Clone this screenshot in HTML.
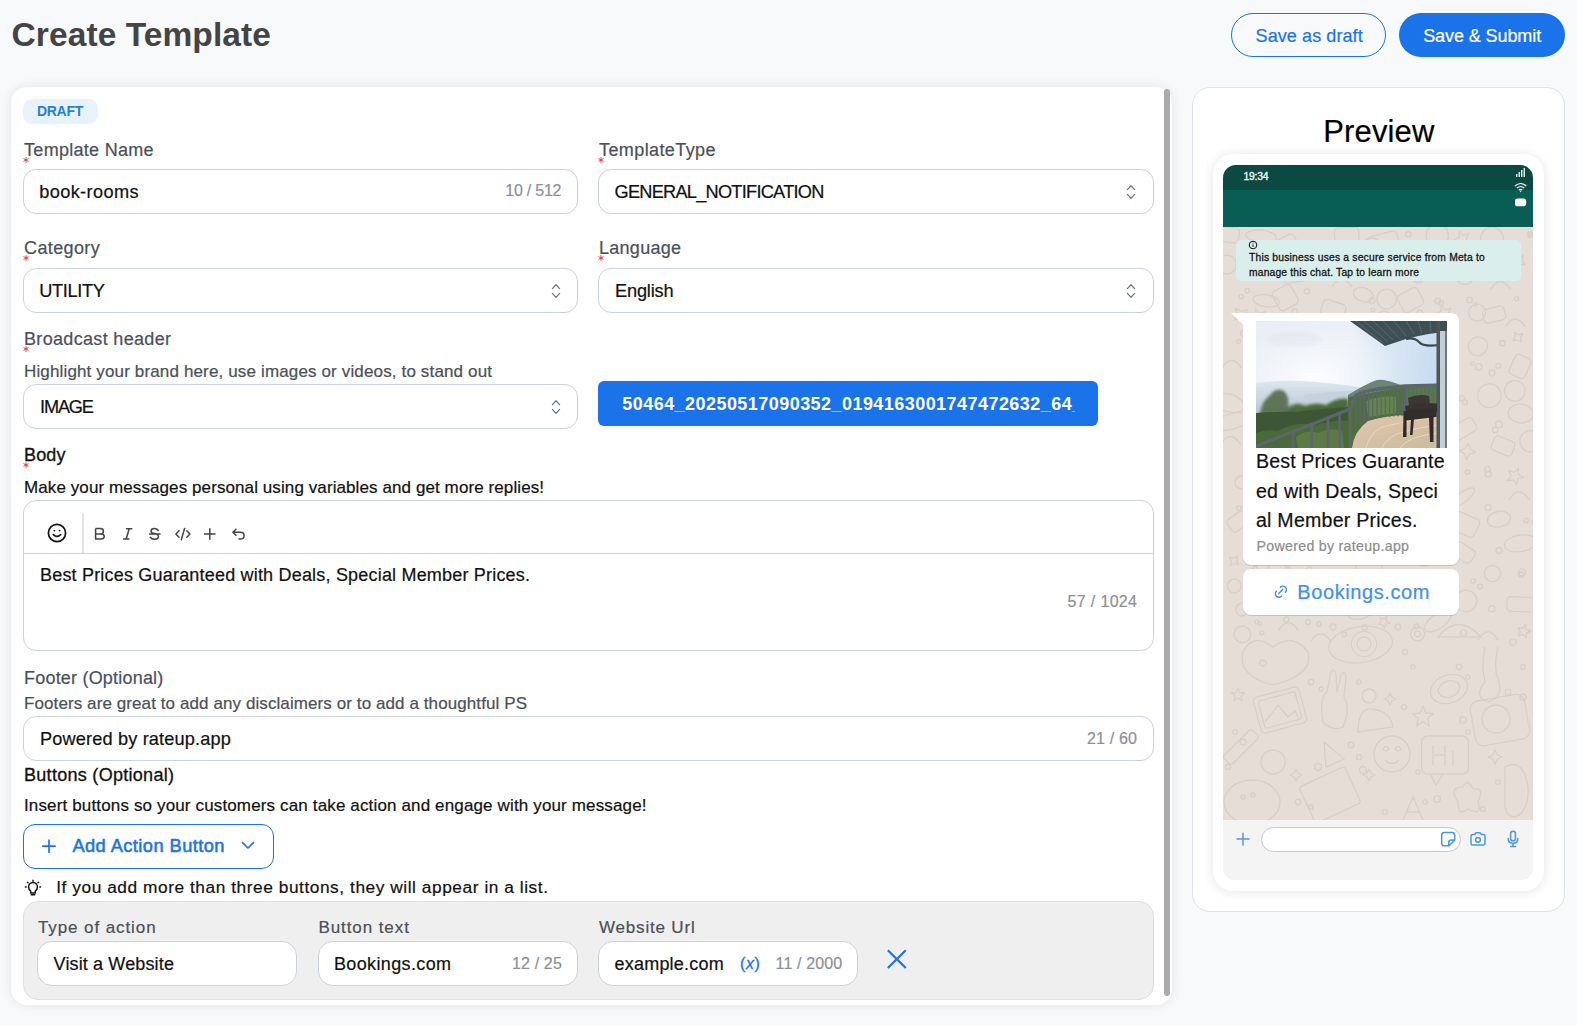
<!DOCTYPE html>
<html><head><meta charset="utf-8"><title>Create Template</title>
<style>
html,body{margin:0;padding:0;}
body{width:1577px;height:1026px;overflow:hidden;position:relative;background:#f8f9fb;font-family:"Liberation Sans",sans-serif;}
.t{position:absolute;white-space:nowrap;}
.b{position:absolute;}
</style></head><body>
<div class="t" style="top:17.94px;font-size:33.5px;line-height:33.5px;color:#444;font-weight:bold;letter-spacing:0.080px;left:11.60px;">Create Template</div>
<div class="b" style="left:1231px;top:13px;width:155px;height:44px;border:1px solid #1a73e8;border-radius:22px;box-sizing:border-box;"></div>
<div class="t" style="top:26.66px;font-size:18px;line-height:18px;color:#1a73e8;letter-spacing:0.087px;-webkit-text-stroke:0.2px #1a73e8;left:1255.60px;">Save as draft</div>
<div class="b" style="left:1399px;top:13px;width:166px;height:44px;background:#1a73e8;border-radius:22px;"></div>
<div class="t" style="top:26.86px;font-size:18px;line-height:18px;color:#fff;letter-spacing:-0.088px;-webkit-text-stroke:0.2px #fff;left:1423.20px;">Save &amp; Submit</div>
<div class="b" style="left:11px;top:87px;width:1161px;height:918px;background:#fff;border-radius:16px;box-shadow:0 0 12px rgba(0,0,0,0.09);"></div>
<div class="b" style="left:1164px;top:89px;width:6px;height:907px;background:#ababab;border-radius:3px;"></div>
<div class="b" style="left:23px;top:99px;width:75px;height:25px;background:#e8f2fc;border-radius:9px;"></div>
<div class="t" style="top:104.15px;font-size:14px;line-height:14px;color:#1f7fe0;font-weight:bold;letter-spacing:-0.259px;left:36.90px;">DRAFT</div>
<div class="t" style="top:140.76px;font-size:18px;line-height:18px;color:#4a5059;letter-spacing:0.279px;-webkit-text-stroke:0.2px #4a5059;left:24.10px;">Template Name</div>
<svg class="b" style="left:21.9px;top:156px" width="8" height="8" viewBox="0 0 8 8"><path d="M4 1.6 V6.4 M1.9 2.8 L6.1 5.2 M6.1 2.8 L1.9 5.2" stroke="#f03030" stroke-width="0.95" stroke-linecap="round"/></svg>
<div class="b" style="left:23px;top:169px;width:555px;height:45px;background:#fff;border:1px solid #cdd3db;border-radius:13px;box-sizing:border-box;"></div>
<div class="t" style="top:183.29px;font-size:18.2px;line-height:18.2px;color:#111;letter-spacing:0.367px;-webkit-text-stroke:0.2px #111;left:39.20px;">book-rooms</div>
<div class="t" style="top:183.46px;font-size:16px;line-height:16px;color:#8b9099;letter-spacing:-0.218px;-webkit-text-stroke:0.2px #8b9099;right:1015.50px;margin-right:0.218px;">10 / 512</div>
<div class="t" style="top:140.76px;font-size:18px;line-height:18px;color:#4a5059;letter-spacing:0.403px;-webkit-text-stroke:0.2px #4a5059;left:599.00px;">TemplateType</div>
<svg class="b" style="left:596.9px;top:156px" width="8" height="8" viewBox="0 0 8 8"><path d="M4 1.6 V6.4 M1.9 2.8 L6.1 5.2 M6.1 2.8 L1.9 5.2" stroke="#f03030" stroke-width="0.95" stroke-linecap="round"/></svg>
<div class="b" style="left:598px;top:169px;width:556px;height:45px;background:#fff;border:1px solid #cdd3db;border-radius:13px;box-sizing:border-box;"></div>
<div class="t" style="top:183.29px;font-size:18.2px;line-height:18.2px;color:#111;letter-spacing:-0.745px;-webkit-text-stroke:0.2px #111;left:614.50px;">GENERAL_NOTIFICATION</div>
<svg class="b" style="left:1125px;top:183px" width="12" height="18" viewBox="0 0 12 18"><path d="M2.4 6.6 L6 2.8 L9.6 6.6 M2.4 11.4 L6 15.3 L9.6 11.4" fill="none" stroke="#6b7280" stroke-width="1.25" stroke-linecap="round" stroke-linejoin="round"/></svg>
<div class="t" style="top:238.76px;font-size:18px;line-height:18px;color:#4a5059;letter-spacing:0.380px;-webkit-text-stroke:0.2px #4a5059;left:24.00px;">Category</div>
<svg class="b" style="left:21.9px;top:254px" width="8" height="8" viewBox="0 0 8 8"><path d="M4 1.6 V6.4 M1.9 2.8 L6.1 5.2 M6.1 2.8 L1.9 5.2" stroke="#f03030" stroke-width="0.95" stroke-linecap="round"/></svg>
<div class="b" style="left:23px;top:268px;width:555px;height:45px;background:#fff;border:1px solid #cdd3db;border-radius:13px;box-sizing:border-box;"></div>
<div class="t" style="top:281.59px;font-size:18.2px;line-height:18.2px;color:#111;letter-spacing:-0.359px;-webkit-text-stroke:0.2px #111;left:39.30px;">UTILITY</div>
<svg class="b" style="left:550px;top:282px" width="12" height="18" viewBox="0 0 12 18"><path d="M2.4 6.6 L6 2.8 L9.6 6.6 M2.4 11.4 L6 15.3 L9.6 11.4" fill="none" stroke="#6b7280" stroke-width="1.25" stroke-linecap="round" stroke-linejoin="round"/></svg>
<div class="t" style="top:238.76px;font-size:18px;line-height:18px;color:#4a5059;letter-spacing:0.273px;-webkit-text-stroke:0.2px #4a5059;left:599.00px;">Language</div>
<svg class="b" style="left:596.9px;top:254px" width="8" height="8" viewBox="0 0 8 8"><path d="M4 1.6 V6.4 M1.9 2.8 L6.1 5.2 M6.1 2.8 L1.9 5.2" stroke="#f03030" stroke-width="0.95" stroke-linecap="round"/></svg>
<div class="b" style="left:598px;top:268px;width:556px;height:45px;background:#fff;border:1px solid #cdd3db;border-radius:13px;box-sizing:border-box;"></div>
<div class="t" style="top:281.59px;font-size:18.2px;line-height:18.2px;color:#111;letter-spacing:-0.182px;-webkit-text-stroke:0.2px #111;left:615.00px;">English</div>
<svg class="b" style="left:1125px;top:282px" width="12" height="18" viewBox="0 0 12 18"><path d="M2.4 6.6 L6 2.8 L9.6 6.6 M2.4 11.4 L6 15.3 L9.6 11.4" fill="none" stroke="#6b7280" stroke-width="1.25" stroke-linecap="round" stroke-linejoin="round"/></svg>
<div class="t" style="top:329.76px;font-size:18px;line-height:18px;color:#4a5059;letter-spacing:0.327px;-webkit-text-stroke:0.2px #4a5059;left:24.00px;">Broadcast header</div>
<svg class="b" style="left:21.9px;top:345px" width="8" height="8" viewBox="0 0 8 8"><path d="M4 1.6 V6.4 M1.9 2.8 L6.1 5.2 M6.1 2.8 L1.9 5.2" stroke="#f03030" stroke-width="0.95" stroke-linecap="round"/></svg>
<div class="t" style="top:363.41px;font-size:17px;line-height:17px;color:#4a5059;letter-spacing:0.145px;-webkit-text-stroke:0.2px #4a5059;left:24.00px;">Highlight your brand here, use images or videos, to stand out</div>
<div class="b" style="left:23px;top:384px;width:555px;height:45px;background:#fff;border:1px solid #cdd3db;border-radius:13px;box-sizing:border-box;"></div>
<div class="t" style="top:397.59px;font-size:18.2px;line-height:18.2px;color:#111;letter-spacing:-1.163px;-webkit-text-stroke:0.2px #111;left:40.00px;">IMAGE</div>
<svg class="b" style="left:550px;top:398px" width="12" height="18" viewBox="0 0 12 18"><path d="M2.4 6.6 L6 2.8 L9.6 6.6 M2.4 11.4 L6 15.3 L9.6 11.4" fill="none" stroke="#6b7280" stroke-width="1.25" stroke-linecap="round" stroke-linejoin="round"/></svg>
<div class="b" style="left:598px;top:381px;width:500px;height:45px;background:#1a73e8;border-radius:6px;overflow:hidden;"></div>
<div class="b" style="left:622px;top:381px;width:453px;height:45px;overflow:hidden;"><div class="t" style="left:0.3px;top:13.96px;font-size:18px;line-height:18px;color:#fff;font-weight:bold;letter-spacing:0.45px;white-space:nowrap;">50464_20250517090352_0194163001747472632_64_abc.jpg</div></div>
<div class="t" style="top:445.76px;font-size:18px;line-height:18px;color:#111;letter-spacing:0.157px;-webkit-text-stroke:0.3px #111;left:24.00px;">Body</div>
<svg class="b" style="left:21.9px;top:461px" width="8" height="8" viewBox="0 0 8 8"><path d="M4 1.6 V6.4 M1.9 2.8 L6.1 5.2 M6.1 2.8 L1.9 5.2" stroke="#f03030" stroke-width="0.95" stroke-linecap="round"/></svg>
<div class="t" style="top:479.41px;font-size:17px;line-height:17px;color:#111;letter-spacing:0.093px;-webkit-text-stroke:0.2px #111;left:24.00px;">Make your messages personal using variables and get more replies!</div>
<div class="b" style="left:23px;top:500px;width:1131px;height:151px;background:#fff;border:1px solid #cdd3db;border-radius:13px;box-sizing:border-box;"></div>
<div class="b" style="left:24px;top:553px;width:1129px;height:1px;background:#cdd3db;"></div>
<div class="b" style="left:82px;top:513px;width:2px;height:40px;background:#dfe3e8;"></div>
<svg class="b" style="left:46px;top:522px" width="22" height="22" viewBox="0 0 22 22"><circle cx="11" cy="11" r="8.6" fill="none" stroke="#111" stroke-width="1.7"/><circle cx="8.4" cy="8.6" r="0.9" fill="#111"/><circle cx="13.6" cy="8.6" r="0.9" fill="#111"/><path d="M7.3 12.6 Q11 16.2 14.7 12.6" fill="none" stroke="#111" stroke-width="1.6" stroke-linecap="round"/></svg>
<svg class="b" style="left:90px;top:524px" width="160" height="20" viewBox="0 0 160 20"><path d="M5.6 4.6 V15 H11 Q14.2 15 14.2 12.45 Q14.2 9.9 11 9.9 H5.6 M5.6 4.6 H10.4 Q13.4 4.6 13.4 7.25 Q13.4 9.9 10.4 9.9" fill="none" stroke="#444" stroke-width="1.5" stroke-linejoin="round"/><path d="M36.5 4.7 H41.8 M33.6 14.9 H38.9 M39.2 4.7 L36.2 14.9" fill="none" stroke="#444" stroke-width="1.5" stroke-linecap="round"/><path d="M68.3 6.4 Q66.8 4.6 64.4 4.6 Q61 4.6 61 7.2 Q61 9 64.5 9.6 Q68.4 10.3 68.4 12.6 Q68.4 15.2 64.6 15.2 Q61.8 15.2 60.2 13.3 M59.6 9.9 H70" fill="none" stroke="#444" stroke-width="1.5" stroke-linecap="round"/><path d="M89 6.8 L85.9 10 L89 13.2 M96.8 6.8 L99.9 10 L96.8 13.2 M94.6 4.4 L91.3 15.8" fill="none" stroke="#444" stroke-width="1.5" stroke-linecap="round" stroke-linejoin="round"/><path d="M119.8 4.7 V15.2 M114.6 10 H125" fill="none" stroke="#444" stroke-width="1.5" stroke-linecap="round"/><path d="M146 5.2 L142.9 8.3 L146 11.3 M143.2 8.3 H150.2 Q154.1 8.3 154.1 11.7 Q154.1 15 150.4 15 H149" fill="none" stroke="#444" stroke-width="1.5" stroke-linecap="round" stroke-linejoin="round"/></svg>
<div class="t" style="top:566.06px;font-size:18px;line-height:18px;color:#111;letter-spacing:0.193px;-webkit-text-stroke:0.2px #111;left:40.00px;">Best Prices Guaranteed with Deals, Special Member Prices.</div>
<div class="t" style="top:594.46px;font-size:16px;line-height:16px;color:#8b9099;letter-spacing:0.334px;-webkit-text-stroke:0.2px #8b9099;right:440.00px;margin-right:-0.334px;">57 / 1024</div>
<div class="t" style="top:668.96px;font-size:18px;line-height:18px;color:#4a5059;letter-spacing:0.203px;-webkit-text-stroke:0.2px #4a5059;left:24.00px;">Footer (Optional)</div>
<div class="t" style="top:694.91px;font-size:17px;line-height:17px;color:#4a5059;letter-spacing:0.091px;-webkit-text-stroke:0.2px #4a5059;left:24.00px;">Footers are great to add any disclaimers or to add a thoughtful PS</div>
<div class="b" style="left:23px;top:716px;width:1131px;height:45px;background:#fff;border:1px solid #cdd3db;border-radius:13px;box-sizing:border-box;"></div>
<div class="t" style="top:729.59px;font-size:18.2px;line-height:18.2px;color:#111;letter-spacing:0.140px;-webkit-text-stroke:0.2px #111;left:40.00px;">Powered by rateup.app</div>
<div class="t" style="top:731.46px;font-size:16px;line-height:16px;color:#8b9099;letter-spacing:0.178px;-webkit-text-stroke:0.2px #8b9099;right:440.00px;margin-right:-0.178px;">21 / 60</div>
<div class="t" style="top:766.06px;font-size:18px;line-height:18px;color:#111;letter-spacing:0.290px;-webkit-text-stroke:0.3px #111;left:24.00px;">Buttons (Optional)</div>
<div class="t" style="top:797.41px;font-size:17px;line-height:17px;color:#111;letter-spacing:0.144px;-webkit-text-stroke:0.2px #111;left:24.00px;">Insert buttons so your customers can take action and engage with your message!</div>
<div class="b" style="left:23px;top:824px;width:251px;height:45px;border:1px solid #1a73e8;border-radius:12px;box-sizing:border-box;"></div>
<svg class="b" style="left:40px;top:838px" width="18" height="18" viewBox="0 0 18 18"><path d="M9 2.2 V14.3 M2.8 8.2 H15" fill="none" stroke="#1a73e8" stroke-width="1.7" stroke-linecap="round"/></svg>
<div class="t" style="top:836.59px;font-size:18.2px;line-height:18.2px;color:#1a73e8;letter-spacing:0.469px;-webkit-text-stroke:0.55px #1a73e8;left:72.40px;">Add Action Button</div>
<svg class="b" style="left:240px;top:839px" width="16" height="12" viewBox="0 0 16 12"><path d="M2.5 3.6 L8 9 L13.5 3.6" fill="none" stroke="#1a73e8" stroke-width="1.6" stroke-linecap="round" stroke-linejoin="round"/></svg>
<svg class="b" style="left:22px;top:876px" width="22" height="22" viewBox="0 0 22 22"><path d="M8.7 15.2 Q6.6 13.6 6.6 11 A4.4 4.4 0 0 1 15.4 11 Q15.4 13.6 13.3 15.2 V17 H8.7 Z M9.3 18.7 H12.7" fill="none" stroke="#111" stroke-width="1.5" stroke-linejoin="round" stroke-linecap="round"/><path d="M11 4.2 V5.2 M5.4 6.2 L6 6.8 M16.6 6.2 L16 6.8 M3.4 11 H4.2 M17.8 11 H18.6" stroke="#111" stroke-width="1.4" stroke-linecap="round"/></svg>
<div class="t" style="top:879.16px;font-size:17.3px;line-height:17.3px;color:#111;letter-spacing:0.557px;-webkit-text-stroke:0.2px #111;left:56.20px;">If you add more than three buttons, they will appear in a list.</div>
<div class="b" style="left:23px;top:901px;width:1131px;height:99px;background:#efefef;border:1px solid #dfdfdf;border-radius:15px;box-sizing:border-box;"></div>
<div class="t" style="top:919.21px;font-size:17px;line-height:17px;color:#4a5059;letter-spacing:0.904px;-webkit-text-stroke:0.2px #4a5059;left:38.00px;">Type of action</div>
<div class="t" style="top:919.21px;font-size:17px;line-height:17px;color:#4a5059;letter-spacing:0.923px;-webkit-text-stroke:0.2px #4a5059;left:318.40px;">Button text</div>
<div class="t" style="top:919.21px;font-size:17px;line-height:17px;color:#4a5059;letter-spacing:0.816px;-webkit-text-stroke:0.2px #4a5059;left:599.00px;">Website Url</div>
<div class="b" style="left:37px;top:941px;width:260px;height:45px;background:#fff;border:1px solid #cdd3db;border-radius:15px;box-sizing:border-box;"></div>
<div class="b" style="left:318px;top:941px;width:260px;height:45px;background:#fff;border:1px solid #cdd3db;border-radius:15px;box-sizing:border-box;"></div>
<div class="b" style="left:598px;top:941px;width:260px;height:45px;background:#fff;border:1px solid #cdd3db;border-radius:15px;box-sizing:border-box;"></div>
<div class="t" style="top:954.76px;font-size:18px;line-height:18px;color:#111;letter-spacing:0.136px;-webkit-text-stroke:0.2px #111;left:53.60px;">Visit a Website</div>
<div class="t" style="top:954.76px;font-size:18px;line-height:18px;color:#111;letter-spacing:0.358px;-webkit-text-stroke:0.2px #111;left:334.00px;">Bookings.com</div>
<div class="t" style="top:956.46px;font-size:16px;line-height:16px;color:#8b9099;letter-spacing:0.145px;-webkit-text-stroke:0.2px #8b9099;right:1015.20px;margin-right:-0.145px;">12 / 25</div>
<div class="t" style="top:954.76px;font-size:18px;line-height:18px;color:#111;letter-spacing:0.215px;-webkit-text-stroke:0.2px #111;left:614.50px;">example.com</div>
<div class="t" style="left:740px;top:955.96px;font-size:16px;line-height:16px;color:#1a73e8;-webkit-text-stroke:0.35px #1a73e8;letter-spacing:0.6px;">(<i>x</i>)</div>
<div class="t" style="top:956.46px;font-size:16px;line-height:16px;color:#8b9099;letter-spacing:0.132px;-webkit-text-stroke:0.2px #8b9099;right:734.80px;margin-right:-0.132px;">11 / 2000</div>
<svg class="b" style="left:884px;top:947px" width="26" height="26" viewBox="0 0 26 26"><path d="M4.6 4 L21 20.2 M21 4 L4.6 20.2" stroke="#1a73e8" stroke-width="2.2" stroke-linecap="square"/></svg>
<div class="b" style="left:1192px;top:87px;width:373px;height:825px;background:#fff;border:1px solid #dfe2e8;border-radius:18px;box-sizing:border-box;"></div>
<div class="t" style="top:115.56px;font-size:31px;line-height:31px;color:#000;letter-spacing:0.140px;-webkit-text-stroke:0.2px #000;left:1323.30px;">Preview</div>
<div class="b" style="left:1213px;top:154px;width:331px;height:737px;background:#fff;border-radius:20px;box-shadow:0 1px 12px rgba(0,0,0,0.11);"></div>
<div class="b" style="left:1223px;top:165px;width:310px;height:715px;border-radius:13px;overflow:hidden;background:#e6ddd6;"><div class="b" style="left:0;top:0;width:310px;height:25px;background:#0a4a43;"></div><div class="b" style="left:0;top:25px;width:310px;height:37px;background:#085e55;"></div><div class="b" id="pat" style="left:0;top:62px;width:310px;height:593px;"><svg width="310" height="593" viewBox="0 0 310 593"><g fill="none" stroke="#d9cfc7" stroke-width="1.3"><ellipse cx="137.6" cy="417.6" rx="32" ry="18" transform="rotate(-8 137.6 417.6)"/><circle cx="141.0" cy="417.0" r="12.6"/><circle cx="141.0" cy="417.0" r="7.0"/><circle cx="194.6" cy="406.8" r="7.0"/><circle cx="194.6" cy="406.8" r="3.0"/><path d="M20 425 Q30 405 50 420 Q70 405 85 425 Q90 445 60 455 Q50 460 40 455 Q15 445 20 425 Z"/><path d="M36 436 Q40 430 44 436 Q40 442 36 436 Z"/><path d="M215 410 Q235 385 258 410 Z"/><rect x="33.5" y="464.5" width="47" height="37" rx="4" transform="rotate(-15 57.0 483.0)"/><rect x="38.0" y="469.0" width="38" height="28" rx="2" transform="rotate(-15 57.0 483.0)"/><path d="M42 495 L55 478 L65 490 L72 484 L76 492"/><path d="M100 495 Q96 470 104 465 L108 445 Q111 440 113 447 L114 465 L118 448 Q121 443 123 449 L121 470 Q128 480 120 500 Q110 505 100 495 Z"/><circle cx="146.0" cy="469.0" r="7.0"/><path d="M135 505 Q135 480 150 482 Q168 485 170 500 Z"/><polygon points="167.0,466.0 168.9,470.1 173.0,472.0 168.9,473.9 167.0,478.0 165.1,473.9 161.0,472.0 165.1,470.1" stroke-linejoin="round"/><polygon points="200.0,479.0 202.9,486.0 210.5,486.6 204.7,491.5 206.5,498.9 200.0,494.9 193.5,498.9 195.3,491.5 189.5,486.6 197.1,486.0" stroke-linejoin="round"/><polygon points="15.0,461.0 16.9,465.5 21.7,465.8 18.0,469.0 19.1,473.7 15.0,471.1 10.9,473.7 12.0,469.0 8.3,465.8 13.1,465.5" stroke-linejoin="round"/><polygon points="73.0,542.0 74.9,546.1 79.0,548.0 74.9,549.9 73.0,554.0 71.1,549.9 67.0,548.0 71.1,546.1" stroke-linejoin="round"/><polygon points="146.0,542.0 147.9,546.1 152.0,548.0 147.9,549.9 146.0,554.0 144.1,549.9 140.0,548.0 144.1,546.1" stroke-linejoin="round"/><polygon points="272.0,523.0 274.2,527.8 279.0,530.0 274.2,532.2 272.0,537.0 269.8,532.2 265.0,530.0 269.8,527.8" stroke-linejoin="round"/><ellipse cx="226.0" cy="462.0" rx="19" ry="14" transform="rotate(-20 226.0 462.0)"/><ellipse cx="226.0" cy="462.0" rx="11" ry="8" transform="rotate(-20 226.0 462.0)"/><path d="M262 420 Q258 440 262 455 Q250 470 265 475 Q282 470 275 452 Q270 440 275 420"/><rect x="249.5" y="470.5" width="55" height="45" rx="8" transform="rotate(-10 277.0 493.0)"/><circle cx="273.0" cy="492.0" r="14.0"/><circle cx="169.0" cy="527.0" r="18.0"/><path d="M160 522 Q163 517 166 522 Q163 526 160 522 Z M172 522 Q175 517 178 522 Q175 526 172 522 Z M162 533 Q169 540 176 533"/><rect x="198.5" y="509.0" width="47" height="38" rx="6" transform="rotate(0 222.0 528.0)"/><path d="M208 548 L213 558 L220 547"/><path d="M210 518 V538 M222 518 V538 M210 528 H222 M230 524 V538"/><path d="M101 515 L121 532 L103 540 Z"/><circle cx="50.0" cy="535.0" r="12.0"/><rect x="12.0" y="500.0" width="12" height="40" rx="3" transform="rotate(45 18.0 520.0)"/><path d="M235 575 Q225 560 240 560 Q245 550 250 562 Q262 560 255 575 Q260 590 245 582 Q235 590 235 575 Z"/><ellipse cx="29.0" cy="575.0" rx="28" ry="22" transform="rotate(0 29.0 575.0)"/><circle cx="20.0" cy="570.0" r="2.0"/><circle cx="30.0" cy="568.0" r="2.0"/><rect x="82.0" y="548.0" width="50" height="40" rx="3" transform="rotate(-25 107.0 568.0)"/><path d="M180 593 L190 570 L200 593 M184 585 H196"/><path d="M282 540 Q300 530 305 560 Q306 585 292 590 Q280 590 282 570 Z"/><circle cx="85.0" cy="395.0" r="2.5"/><circle cx="96.0" cy="397.0" r="2.2"/><circle cx="110.0" cy="400.0" r="3.0"/><circle cx="34.0" cy="395.0" r="2.1"/><circle cx="175.0" cy="400.0" r="2.8"/><circle cx="182.0" cy="425.0" r="2.5"/><circle cx="190.0" cy="440.0" r="2.1"/><circle cx="236.0" cy="440.0" r="2.8"/><circle cx="245.0" cy="450.0" r="2.1"/><circle cx="88.0" cy="455.0" r="2.7"/><circle cx="98.0" cy="462.0" r="2.1"/><circle cx="136.0" cy="455.0" r="2.1"/><circle cx="181.0" cy="480.0" r="2.6"/><circle cx="240.0" cy="493.0" r="3.2"/><circle cx="245.0" cy="505.0" r="2.2"/><circle cx="12.0" cy="505.0" r="2.3"/><circle cx="20.0" cy="515.0" r="2.9"/><circle cx="95.0" cy="540.0" r="3.4"/><circle cx="128.0" cy="518.0" r="2.9"/><circle cx="136.0" cy="530.0" r="2.6"/><circle cx="140.0" cy="543.0" r="3.5"/><circle cx="195.0" cy="545.0" r="2.1"/><circle cx="214.0" cy="572.0" r="3.3"/><circle cx="260.0" cy="582.0" r="2.4"/><circle cx="275.0" cy="555.0" r="2.2"/><circle cx="88.0" cy="580.0" r="2.2"/><circle cx="162.0" cy="585.0" r="2.5"/><circle cx="290.0" cy="415.0" r="3.2"/><circle cx="300.0" cy="440.0" r="2.3"/><circle cx="285.0" cy="465.0" r="2.9"/><circle cx="300.0" cy="470.0" r="3.0"/><circle cx="5.0" cy="540.0" r="2.6"/><circle cx="75.0" cy="575.0" r="2.8"/><circle cx="202.0" cy="575.0" r="2.1"/><rect x="-5.9" y="0.1" width="21.98629227937164" height="15.141471703767916" rx="4" transform="rotate(5.989330445534712 5.1 7.7)"/><ellipse cx="38.2" cy="9.4" rx="15.29094990356614" ry="6.220482553610765" transform="rotate(5.953896820693679 38.2 9.4)"/><rect x="55.4" y="8.9" width="20.03112870846261" height="21.801748474925823" rx="4" transform="rotate(-26.73539552215265 65.5 19.8)"/><circle cx="89.5" cy="17.6" r="2.6"/><circle cx="92.9" cy="22.9" r="2.4"/><rect x="111.6" y="0.7" width="24.32117827947026" height="17.798952042824922" rx="4" transform="rotate(-3.0656268089010865 123.8 9.6)"/><circle cx="149.1" cy="21.0" r="10.0"/><rect x="146.1" y="6.5" width="29.903343152532877" height="20.21924786609715" rx="4" transform="rotate(-15.078312753409556 161.1 16.6)"/><circle cx="192.9" cy="16.0" r="2.5"/><circle cx="185.3" cy="7.2" r="2.7"/><circle cx="214.3" cy="8.5" r="11.2"/><polygon points="245.9,6.5 243.3,11.8 246.7,16.5 240.9,15.6 237.5,20.4 236.5,14.6 230.9,12.8 236.2,10.1 236.2,4.2 240.3,8.4" stroke-linejoin="round"/><circle cx="269.0" cy="11.5" r="11.3"/><circle cx="307.2" cy="6.7" r="2.2"/><circle cx="306.9" cy="8.5" r="2.0"/><circle cx="4.1" cy="37.5" r="9.4"/><polygon points="50.4,35.7 50.3,41.3 53.9,45.7 48.2,45.6 43.9,49.1 44.0,43.5 40.5,39.1 46.1,39.2" stroke-linejoin="round"/><rect x="59.8" y="39.1" width="23.82980437199253" height="15.980696305556508" rx="4" transform="rotate(-7.411598881724508 71.7 47.1)"/><circle cx="90.7" cy="37.2" r="3.4"/><circle cx="82.9" cy="39.2" r="1.7"/><path d="M108.2 43.7 Q118.2 27.7 128.2 43.7"/><circle cx="145.0" cy="31.3" r="2.4"/><circle cx="177.2" cy="40.8" r="6.7"/><circle cx="194.8" cy="47.6" r="7.9"/><rect x="203.2" y="34.0" width="22.70070720913988" height="18.920567688453094" rx="4" transform="rotate(1.1434163273625089 214.6 43.5)"/><circle cx="241.7" cy="47.1" r="10.1"/><circle cx="280.5" cy="43.6" r="2.8"/><circle cx="287.4" cy="44.0" r="2.9"/><polygon points="300.4,28.3 299.5,33.5 302.1,38.0 296.9,37.1 292.4,39.7 293.3,34.6 290.7,30.0 295.9,30.9" stroke-linejoin="round"/><circle cx="18.2" cy="69.6" r="2.2"/><circle cx="24.3" cy="63.6" r="2.3"/><ellipse cx="43.2" cy="73.8" rx="13.250160562489697" ry="5.968224730064047" transform="rotate(8.411122534582063 43.2 73.8)"/><rect x="51.8" y="59.7" width="20.89327527113265" height="21.74514978860586" rx="4" transform="rotate(-29.362331215796154 62.2 70.6)"/><circle cx="83.8" cy="64.5" r="2.6"/><path d="M109.0 60.0 Q119.0 44.0 129.0 60.0"/><ellipse cx="140.2" cy="67.6" rx="10.079132677525239" ry="6.9426787190997175" transform="rotate(16.919438690030844 140.2 67.6)"/><circle cx="163.6" cy="72.0" r="9.8"/><rect x="176.3" y="63.3" width="22.484247562433893" height="19.433527108043208" rx="4" transform="rotate(-29.055652538419466 187.6 73.0)"/><circle cx="214.9" cy="73.9" r="2.7"/><circle cx="218.0" cy="76.1" r="2.4"/><circle cx="246.5" cy="72.9" r="2.7"/><circle cx="252.5" cy="77.4" r="1.7"/><path d="M267.5 62.5 Q277.5 46.5 287.5 62.5"/><circle cx="293.5" cy="71.7" r="2.1"/><polygon points="24.3,82.8 21.5,88.3 22.9,94.4 17.3,91.6 11.2,93.0 14.0,87.4 12.6,81.3 18.2,84.1" stroke-linejoin="round"/><polygon points="42.7,84.4 40.2,89.8 43.9,94.5 38.0,93.8 34.7,98.7 33.5,92.9 27.8,91.2 33.0,88.3 32.8,82.4 37.1,86.4" stroke-linejoin="round"/><circle cx="71.8" cy="84.4" r="2.6"/><ellipse cx="96.0" cy="93.0" rx="10.348222364121082" ry="5.707794855292622" transform="rotate(9.528099134679593 96.0 93.0)"/><rect x="98.5" y="74.7" width="23.43016896975179" height="16.824870138188636" rx="4" transform="rotate(19.354307036307894 110.2 83.1)"/><circle cx="149.9" cy="83.0" r="1.9"/><circle cx="148.9" cy="73.6" r="2.9"/><path d="M151.1 91.9 Q161.1 75.9 171.1 91.9"/><circle cx="196.9" cy="85.6" r="2.6"/><polygon points="227.9,81.3 225.0,86.4 228.1,91.3 222.4,90.1 218.7,94.6 218.1,88.8 212.6,86.6 218.0,84.3 218.4,78.4 222.3,82.8" stroke-linejoin="round"/><circle cx="254.1" cy="85.6" r="8.5"/><rect x="260.1" y="80.6" width="21.996741481301864" height="14.126897995879661" rx="4" transform="rotate(-13.805394732389445 271.1 87.7)"/><path d="M282.2 100.0 Q292.2 84.0 302.2 100.0"/><circle cx="15.6" cy="114.6" r="2.0"/><circle cx="20.5" cy="106.5" r="2.8"/><circle cx="32.9" cy="120.0" r="2.9"/><circle cx="63.3" cy="115.6" r="6.6"/><circle cx="88.6" cy="114.1" r="10.2"/><circle cx="114.9" cy="117.3" r="3.3"/><circle cx="123.3" cy="111.9" r="2.8"/><path d="M125.5 116.9 Q135.5 100.9 145.5 116.9"/><ellipse cx="163.3" cy="121.6" rx="16.646290445348058" ry="8.37986818771731" transform="rotate(35.68012491381705 163.3 121.6)"/><polygon points="193.9,110.7 195.4,115.3 200.1,116.1 196.2,118.9 196.9,123.6 193.0,120.8 188.7,122.9 190.2,118.4 186.9,114.9 191.7,115.0" stroke-linejoin="round"/><circle cx="213.0" cy="120.4" r="6.4"/><ellipse cx="254.9" cy="119.4" rx="9.753682736110662" ry="9.281143181860745" transform="rotate(-34.670197210043085 254.9 119.4)"/><circle cx="279.5" cy="116.2" r="2.7"/><polygon points="299.7,107.0 297.5,110.8 298.2,115.2 294.3,113.0 289.9,113.7 292.2,109.8 291.5,105.4 295.3,107.7" stroke-linejoin="round"/><path d="M-1.3 141.3 Q8.7 125.3 18.7 141.3"/><circle cx="41.3" cy="143.6" r="2.5"/><path d="M50.9 152.5 Q60.9 136.5 70.9 152.5"/><polygon points="84.8,125.7 85.7,131.8 91.6,133.7 86.1,136.5 86.0,142.6 81.7,138.2 75.8,140.1 78.7,134.6 75.1,129.6 81.2,130.6" stroke-linejoin="round"/><rect x="103.5" y="137.1" width="25.191132164970206" height="17.459062519268237" rx="4" transform="rotate(27.210817840069716 116.0 145.8)"/><circle cx="151.5" cy="139.5" r="2.2"/><circle cx="159.1" cy="144.1" r="1.8"/><ellipse cx="177.8" cy="151.7" rx="9.128296163950154" ry="8.12724157202576" transform="rotate(30.388341698404474 177.8 151.7)"/><rect x="183.1" y="126.5" width="21.33234499534614" height="17.05942908455009" rx="4" transform="rotate(32.96509876650072 193.8 135.0)"/><circle cx="222.8" cy="146.5" r="2.1"/><circle cx="212.9" cy="143.8" r="2.1"/><circle cx="255.7" cy="139.8" r="3.2"/><circle cx="249.4" cy="136.5" r="1.7"/><circle cx="269.0" cy="145.8" r="3.0"/><circle cx="275.4" cy="138.7" r="2.4"/><rect x="288.5" y="128.6" width="17.18275796024625" height="21.576371798603947" rx="4" transform="rotate(24.727324936820892 297.1 139.4)"/><ellipse cx="6.8" cy="176.1" rx="14.369033802342773" ry="8.82155672930683" transform="rotate(17.654181709724114 6.8 176.1)"/><polygon points="42.6,161.0 41.4,164.6 44.0,167.4 40.1,167.3 38.3,170.7 37.2,167.0 33.4,166.3 36.6,164.1 36.1,160.3 39.2,162.6" stroke-linejoin="round"/><polygon points="75.8,157.8 73.8,162.6 75.4,167.7 70.5,165.7 65.5,167.3 67.5,162.4 65.9,157.3 70.7,159.4" stroke-linejoin="round"/><rect x="79.7" y="168.9" width="25.706565894189904" height="14.299407205364979" rx="4" transform="rotate(-32.8187631597344 92.5 176.1)"/><circle cx="110.4" cy="166.5" r="3.1"/><rect x="133.9" y="165.3" width="22.850120408036563" height="12.03314327127848" rx="4" transform="rotate(20.838828644959683 145.3 171.3)"/><polygon points="178.7,163.4 176.9,168.9 179.1,174.2 173.6,172.5 168.3,174.7 170.0,169.2 167.9,163.9 173.3,165.6" stroke-linejoin="round"/><ellipse cx="194.5" cy="174.6" rx="11.113070596486443" ry="8.782207004920302" transform="rotate(-21.541109836203702 194.5 174.6)"/><ellipse cx="223.7" cy="168.3" rx="9.690658862226393" ry="9.552333305913827" transform="rotate(-17.01446666302079 223.7 168.3)"/><circle cx="238.8" cy="171.4" r="2.8"/><circle cx="241.9" cy="175.2" r="2.5"/><circle cx="266.4" cy="168.7" r="11.8"/><circle cx="291.8" cy="163.9" r="10.3"/><ellipse cx="9.1" cy="194.4" rx="17.939703665993854" ry="7.74538253244944" transform="rotate(-15.066027058288014 9.1 194.4)"/><circle cx="31.5" cy="194.5" r="1.9"/><circle cx="73.9" cy="203.9" r="11.5"/><circle cx="98.7" cy="187.3" r="3.0"/><circle cx="95.9" cy="189.4" r="2.5"/><circle cx="113.0" cy="188.0" r="9.0"/><circle cx="149.8" cy="193.1" r="3.3"/><circle cx="167.3" cy="199.1" r="8.3"/><circle cx="188.2" cy="192.0" r="2.3"/><circle cx="197.0" cy="185.9" r="1.6"/><circle cx="225.3" cy="190.6" r="2.4"/><rect x="225.4" y="195.3" width="27.959573735861134" height="14.806377045937616" rx="4" transform="rotate(-31.386773821508 239.4 202.7)"/><circle cx="275.9" cy="197.4" r="3.4"/><circle cx="272.2" cy="202.9" r="2.7"/><ellipse cx="297.7" cy="186.5" rx="12.600374953603856" ry="9.378631857808653" transform="rotate(4.332238167064276 297.7 186.5)"/><path d="M-2.3 217.5 Q7.7 201.5 17.7 217.5"/><circle cx="37.4" cy="223.1" r="3.2"/><circle cx="45.6" cy="224.1" r="1.8"/><circle cx="63.5" cy="217.1" r="3.0"/><circle cx="89.3" cy="216.3" r="10.0"/><circle cx="110.2" cy="223.6" r="2.6"/><circle cx="143.9" cy="220.2" r="3.0"/><circle cx="144.9" cy="215.0" r="1.8"/><circle cx="170.0" cy="217.7" r="10.9"/><ellipse cx="189.6" cy="212.4" rx="12.445540917850675" ry="8.729202729618851" transform="rotate(-23.19960512109649 189.6 212.4)"/><circle cx="216.9" cy="225.5" r="9.4"/><polygon points="245.2,216.2 247.3,222.0 252.6,225.1 246.8,227.2 243.7,232.5 241.7,226.7 236.4,223.6 242.1,221.5" stroke-linejoin="round"/><rect x="269.1" y="211.4" width="22.04571361359365" height="15.120160166076099" rx="4" transform="rotate(22.003727637994054 280.1 218.9)"/><circle cx="307.4" cy="214.3" r="10.6"/><circle cx="18.5" cy="255.4" r="6.4"/><polygon points="48.4,248.0 49.1,252.7 53.6,254.3 49.4,256.4 49.3,261.1 46.0,257.7 41.5,259.1 43.7,254.9 40.9,251.0 45.6,251.8" stroke-linejoin="round"/><polygon points="58.6,233.1 60.2,238.1 65.5,239.0 61.2,242.1 62.0,247.4 57.7,244.2 52.9,246.6 54.6,241.6 50.8,237.8 56.2,237.8" stroke-linejoin="round"/><circle cx="96.0" cy="238.0" r="2.7"/><circle cx="100.3" cy="247.3" r="2.5"/><ellipse cx="117.5" cy="245.9" rx="9.895003062733762" ry="6.501746420727546" transform="rotate(35.4832366602963 117.5 245.9)"/><ellipse cx="137.5" cy="242.7" rx="9.010368213759024" ry="7.687381591704536" transform="rotate(39.709924138003956 137.5 242.7)"/><ellipse cx="165.0" cy="243.7" rx="11.181218402666882" ry="7.631388538880948" transform="rotate(3.760178832446563 165.0 243.7)"/><rect x="178.1" y="238.4" width="16.774322005398744" height="13.941152252130973" rx="4" transform="rotate(26.939396762940497 186.5 245.4)"/><circle cx="223.6" cy="239.5" r="2.5"/><circle cx="223.5" cy="243.4" r="2.6"/><circle cx="244.5" cy="245.1" r="2.3"/><circle cx="265.2" cy="246.9" r="3.0"/><circle cx="264.5" cy="242.2" r="2.8"/><polygon points="295.4,241.4 295.3,247.3 300.5,250.1 294.8,251.8 293.8,257.6 290.4,252.8 284.5,253.5 288.1,248.8 285.6,243.5 291.2,245.4" stroke-linejoin="round"/><circle cx="16.0" cy="281.1" r="2.4"/><circle cx="25.5" cy="273.9" r="1.7"/><path d="M21.1 275.1 Q31.1 259.1 41.1 275.1"/><path d="M61.9 281.2 Q71.9 265.2 81.9 281.2"/><circle cx="98.8" cy="269.9" r="3.3"/><circle cx="108.6" cy="276.0" r="8.2"/><circle cx="140.0" cy="267.0" r="2.2"/><circle cx="149.1" cy="259.5" r="2.9"/><ellipse cx="163.7" cy="270.4" rx="16.398071842159524" ry="7.162246670117984" transform="rotate(-36.059413131918625 163.7 270.4)"/><path d="M184.5 274.7 Q194.5 258.7 204.5 274.7"/><path d="M205.5 274.6 Q215.5 258.6 225.5 274.6"/><ellipse cx="238.5" cy="271.4" rx="15.900012021086763" ry="5.203247419579612" transform="rotate(-37.211649141281484 238.5 271.4)"/><circle cx="265.1" cy="280.6" r="3.0"/><path d="M286.1 272.9 Q296.1 256.9 306.1 272.9"/><rect x="4.9" y="287.3" width="20.430770836317485" height="14.756303272948106" rx="4" transform="rotate(-34.735986884608536 15.1 294.7)"/><rect x="29.0" y="300.4" width="29.20550199534483" height="12.242567049415284" rx="4" transform="rotate(-18.629361782161183 43.6 306.5)"/><path d="M54.6 311.2 Q64.6 295.2 74.6 311.2"/><circle cx="89.0" cy="294.5" r="9.0"/><ellipse cx="124.7" cy="293.3" rx="15.646392119898149" ry="9.11377626255564" transform="rotate(21.82475039441301 124.7 293.3)"/><circle cx="144.9" cy="295.9" r="2.4"/><rect x="151.7" y="287.2" width="19.462305171106717" height="12.647330258007795" rx="4" transform="rotate(-32.629539640856585 161.4 293.6)"/><path d="M185.9 299.9 Q195.9 283.9 205.9 299.9"/><circle cx="227.9" cy="307.8" r="1.9"/><circle cx="227.9" cy="312.0" r="2.2"/><rect x="229.5" y="287.8" width="25.437520662613707" height="19.47977044720684" rx="4" transform="rotate(24.289095209324074 242.2 297.5)"/><ellipse cx="276.0" cy="292.2" rx="11.644039321799369" ry="7.834421033697794" transform="rotate(-10.162317005362212 276.0 292.2)"/><circle cx="303.3" cy="293.6" r="2.2"/><circle cx="311.0" cy="295.2" r="2.1"/><polygon points="14.7,329.2 13.8,333.5 15.8,337.5 11.5,336.5 7.5,338.6 8.5,334.2 6.4,330.3 10.8,331.2" stroke-linejoin="round"/><circle cx="47.8" cy="317.8" r="10.9"/><circle cx="71.1" cy="332.5" r="2.3"/><circle cx="64.9" cy="341.9" r="2.4"/><ellipse cx="98.7" cy="322.7" rx="13.042024719919112" ry="6.299741110764376" transform="rotate(22.222102084610214 98.7 322.7)"/><polygon points="125.3,310.4 127.5,315.6 132.5,318.2 127.3,320.4 124.7,325.4 122.6,320.2 117.5,317.6 122.7,315.4" stroke-linejoin="round"/><path d="M130.1 320.8 Q140.1 304.8 150.1 320.8"/><path d="M150.7 333.2 Q160.7 317.2 170.7 333.2"/><circle cx="200.7" cy="330.7" r="8.2"/><circle cx="223.2" cy="317.4" r="2.6"/><circle cx="221.3" cy="323.3" r="2.5"/><rect x="230.0" y="318.3" width="21.56880983513357" height="14.711668715610273" rx="4" transform="rotate(34.17671173685106 240.8 325.6)"/><circle cx="276.0" cy="323.5" r="3.0"/><ellipse cx="297.5" cy="316.3" rx="16.219980241909862" ry="8.222391053929984" transform="rotate(-8.741510672550383 297.5 316.3)"/><circle cx="11.3" cy="359.0" r="6.9"/><polygon points="32.9,337.2 34.3,341.9 38.4,344.5 33.8,345.9 31.2,350.0 29.7,345.4 25.6,342.8 30.3,341.3" stroke-linejoin="round"/><ellipse cx="56.9" cy="344.6" rx="12.570472291121483" ry="7.864322536520458" transform="rotate(34.178204757478014 56.9 344.6)"/><circle cx="95.3" cy="345.1" r="2.1"/><circle cx="86.6" cy="342.8" r="2.7"/><circle cx="122.3" cy="356.5" r="3.1"/><circle cx="130.5" cy="352.8" r="2.5"/><rect x="132.6" y="333.1" width="25.635031920252594" height="20.911373031159947" rx="4" transform="rotate(9.822709895728451 145.5 343.6)"/><polygon points="176.5,347.5 177.3,351.4 181.2,352.4 177.7,354.4 177.9,358.4 174.9,355.7 171.2,357.2 172.8,353.5 170.3,350.4 174.3,350.8" stroke-linejoin="round"/><polygon points="190.9,342.7 192.3,347.4 196.4,350.2 191.7,351.6 189.0,355.7 187.6,350.9 183.5,348.2 188.2,346.8" stroke-linejoin="round"/><circle cx="229.5" cy="356.7" r="3.2"/><circle cx="250.1" cy="354.0" r="2.4"/><circle cx="257.1" cy="359.6" r="2.5"/><circle cx="269.5" cy="346.5" r="8.2"/><circle cx="299.1" cy="345.2" r="3.4"/><circle cx="298.0" cy="347.6" r="2.7"/><circle cx="19.1" cy="382.6" r="6.4"/><ellipse cx="36.5" cy="374.6" rx="13.53907854550668" ry="8.28547887655969" transform="rotate(-36.747869469859 36.5 374.6)"/><circle cx="58.3" cy="384.6" r="3.0"/><circle cx="63.4" cy="392.5" r="2.5"/><circle cx="96.1" cy="368.5" r="2.8"/><path d="M100.0 374.4 Q110.0 358.4 120.0 374.4"/><ellipse cx="139.2" cy="382.6" rx="15.175205611403538" ry="8.605396484232823" transform="rotate(-22.309857567837117 139.2 382.6)"/><circle cx="175.0" cy="379.0" r="2.3"/><circle cx="202.3" cy="376.2" r="3.3"/><circle cx="204.1" cy="378.5" r="1.9"/><circle cx="218.7" cy="371.6" r="9.8"/><circle cx="243.0" cy="373.9" r="10.8"/><circle cx="268.8" cy="381.8" r="3.2"/><rect x="283.9" y="370.1" width="28.54541492063197" height="14.520315944623544" rx="4" transform="rotate(2.4990890479410766 298.2 377.4)"/><circle cx="19.4" cy="407.3" r="8.3"/><circle cx="36.6" cy="396.6" r="1.9"/><circle cx="38.9" cy="405.8" r="2.0"/><path d="M55.3 403.6 Q65.3 387.6 75.3 403.6"/><path d="M87.7 414.7 Q97.7 398.7 107.7 414.7"/><circle cx="121.2" cy="407.4" r="2.3"/><circle cx="141.5" cy="400.6" r="2.6"/><polygon points="164.0,389.6 163.4,393.9 166.9,396.3 162.7,397.1 161.4,401.2 159.4,397.4 155.1,397.4 158.1,394.4 156.7,390.3 160.6,392.2" stroke-linejoin="round"/><circle cx="193.4" cy="399.4" r="2.4"/><ellipse cx="214.9" cy="394.3" rx="15.367253544508053" ry="7.254265513114805" transform="rotate(-34.90650854217405 214.9 394.3)"/><circle cx="240.6" cy="406.0" r="3.1"/><path d="M255.0 412.8 Q265.0 396.8 275.0 412.8"/><polygon points="302.4,397.6 303.2,402.4 307.8,403.9 303.4,406.1 303.3,411.0 299.9,407.5 295.3,408.9 297.5,404.6 294.7,400.6 299.5,401.5" stroke-linejoin="round"/></g></svg></div><div class="b" style="left:0;top:655px;width:310px;height:60px;background:#f5f4f4;"></div></div>
<div class="t" style="top:172.10px;font-size:10.4px;line-height:10.4px;color:#fff;letter-spacing:-0.282px;-webkit-text-stroke:0.3px #fff;left:1243.60px;">19:34</div>
<svg class="b" style="left:1512px;top:166px" width="18" height="44" viewBox="0 0 18 44"><rect x="4.1" y="8" width="1.3" height="3" fill="#fff"/><rect x="6.6" y="6" width="1.3" height="5" fill="#fff"/><rect x="9.1" y="4" width="1.3" height="7" fill="#fff"/><rect x="11.6" y="2" width="1.3" height="9" fill="#fff"/><path d="M2.8 20.2 Q8.6 14.8 14.4 20.2 M4.8 22.2 Q8.6 18.8 12.4 22.2 M6.8 24.2 Q8.6 22.6 10.4 24.2" fill="none" stroke="#fff" stroke-width="1.1"/><circle cx="8.6" cy="25.5" r="0.7" fill="#fff"/><rect x="3" y="32.5" width="11.2" height="7.8" rx="2.6" fill="#fff"/></svg>
<div class="b" style="left:1236px;top:240px;width:285px;height:41px;background:#daefec;border-radius:5px;"></div>
<svg class="b" style="left:1248px;top:240px" width="10" height="10" viewBox="0 0 10 10"><circle cx="5" cy="5" r="3.8" fill="none" stroke="#111" stroke-width="1"/><path d="M5 4.3 V7" stroke="#111" stroke-width="0.9"/><circle cx="5" cy="3" r="0.5" fill="#111"/></svg>
<div class="t" style="top:253.18px;font-size:10.3px;line-height:10.3px;color:#111;letter-spacing:0.206px;-webkit-text-stroke:0.28px #111;left:1249.00px;">This business uses a secure service from Meta to</div>
<div class="t" style="top:267.88px;font-size:10.3px;line-height:10.3px;color:#111;letter-spacing:0.173px;-webkit-text-stroke:0.28px #111;left:1249.00px;">manage this chat. Tap to learn more</div>
<svg class="b" style="left:1231px;top:313px" width="13" height="13" viewBox="0 0 13 13"><path d="M0 0 H12.5 V12 Z" fill="#fff"/></svg>
<div class="b" style="left:1243px;top:313px;width:216px;height:252px;background:#fff;border-radius:0 8px 8px 8px;box-shadow:0 1px 0.5px rgba(0,0,0,0.13);"></div>
<div class="b" id="photo" style="left:1256px;top:321px;width:191px;height:127px;overflow:hidden;"><svg width="191" height="127" viewBox="0 0 191 127"><defs><linearGradient id="sky" x1="0" y1="0" x2="1" y2="0.1"><stop offset="0" stop-color="#e8eef4"/><stop offset="0.5" stop-color="#e9f0f7"/><stop offset="1" stop-color="#c6dbf0"/></linearGradient><radialGradient id="glow" cx="0.3" cy="0.45" r="0.45"><stop offset="0" stop-color="#fbfcfd"/><stop offset="1" stop-color="#fbfcfd" stop-opacity="0"/></radialGradient><linearGradient id="haze" x1="0" y1="0" x2="0" y2="1"><stop offset="0" stop-color="#dfe7ee"/><stop offset="1" stop-color="#b3c5d3"/></linearGradient><linearGradient id="deck" x1="0" y1="0" x2="1" y2="1"><stop offset="0" stop-color="#ddc9ae"/><stop offset="1" stop-color="#cfb99c"/></linearGradient><filter id="bl"><feGaussianBlur stdDeviation="0.7"/></filter><filter id="bl2"><feGaussianBlur stdDeviation="1.4"/></filter></defs><rect width="191" height="127" fill="url(#sky)"/><rect width="191" height="127" fill="url(#glow)"/><ellipse cx="38" cy="18" rx="28" ry="8" fill="#e2e8ef" opacity="0.6" filter="url(#bl2)"/><g filter="url(#bl)"><path d="M0 62 Q30 58 60 61 Q85 63 108 67 L108 95 L0 95 Z" fill="url(#haze)"/><path d="M48 74 Q75 70 96 70 L96 86 L50 88 Z" fill="#c5d2dc"/><path d="M92 74 Q108 64 118 60 Q123 58 128 59 Q138 61 150 66 L150 90 L92 90 Z" fill="#6d8479"/><path d="M150 66 L181 64 L181 80 L150 82 Z" fill="#9fb2b8"/></g><g filter="url(#bl2)"><path d="M4 92 Q6 80 14 74 Q20 66 28 70 Q34 76 32 86 Q40 80 48 84 Q52 88 50 94 L4 96 Z" fill="#55694a" opacity="0.9"/><path d="M30 92 Q36 84 46 86 Q58 80 70 84 Q82 76 92 78 L94 96 L30 98 Z" fill="#4a6a3a"/></g><g filter="url(#bl)"><path d="M0 92 Q20 90 40 91 Q60 88 94 86 L96 127 L0 127 Z" fill="#3e5634"/><path d="M0 112 Q10 108 22 110 Q40 100 60 104 Q80 98 95 100 L95 127 L0 127 Z" fill="#4c6b3a"/><path d="M40 116 Q50 108 62 112 Q74 106 86 110 L88 127 L42 127 Z" fill="#5d7a45"/><path d="M92 76 L149 66 L149 97 L112 104 L100 127 L92 127 Z" fill="#4f6d3c"/><path d="M110 80 Q125 74 140 76 L140 92 L112 96 Z" fill="#66854b"/><path d="M149 65 L181 64 L181 84 L149 86 Z" fill="#587846"/><path d="M96 127 Q98 110 112 100 Q128 95 148 94 Q152 88 160 87 L184 88 L191 88 L191 127 Z" fill="url(#deck)"/><path d="M110 127 Q113 114 124 107 Q140 101 184 96 M126 127 Q130 118 141 113 Q158 107 184 104 M144 127 Q148 121 158 117 Q170 113 184 112" fill="none" stroke="#e6d6c1" stroke-width="1"/></g><path d="M94 0 L191 0 L191 11 Q172 12 150 18 L129 25 Z" fill="#3e4f56"/><path d="M100 0 L127 22 M108 0 L132 21 M117 0 L137 19 M127 0 L143 17 M138 0 L150 15 M150 0 L158 13 M162 0 L166 12 M174 0 L175 11" stroke="#5a6c73" stroke-width="0.9"/><path d="M150 18 Q158 16 163 21 Q168 27 189 23" fill="none" stroke="#38484e" stroke-width="2.2"/><rect x="180.5" y="0" width="3.5" height="127" fill="#4b565b"/><rect x="184" y="10" width="7" height="117" fill="#c2ced6"/><rect x="189" y="10" width="2" height="117" fill="#6d797e"/><g fill="none" stroke="#5b676d" stroke-linecap="butt"><path d="M-2 126 L93 88.5 Q96.5 87 96.8 80 Q98 73 109 70.5 L121 68 L149 65 L181 64.2" stroke-width="3.3"/><path d="M37 111 V127 M55.7 104 V127 M72 97.5 V127 M83.5 93 V127 M94.4 88.5 V127" stroke-width="2.6"/><path d="M100 73.5 V106 M104.2 72 V103 M108.4 71 V101 M112.6 70.2 V99.5 M116.8 69.4 V98.5 M121 68.6 V97.5 M125.2 68 V96.8 M129.4 67.5 V96.3 M133.6 67 V95.8 M137.8 66.6 V95.5 M142 66.2 V95.3 M146 65.8 V95" stroke-width="1.3"/><path d="M149 65 V96" stroke-width="2.4"/><path d="M153 65 V84 M157 64.9 V84 M161 64.8 V84 M165 64.7 V84 M169 64.6 V84 M173 64.5 V84 M177 64.4 V84" stroke-width="1.1"/></g><path d="M152 77 Q162 72.5 173 75 L174 83 L153 84 Z" fill="#3d3635"/><path d="M149 85 Q165 80.5 181 82.5 L181 90 Q166 88 150 92 Z" fill="#38312f"/><path d="M147.5 90 L181 87.5 L180.5 96 L150 99.5 Z" fill="#332d2c"/><path d="M147.5 92 L150.5 92 L150.5 116 L147 116 Z M173 95 L177.5 94.5 L177.5 121 L174 121 Z M155 98 L158 98 L156.5 114 L154 114 Z" fill="#2f2a29"/></svg></div>
<div class="t" style="top:452.41px;font-size:19.6px;line-height:19.6px;color:#111;letter-spacing:0.122px;-webkit-text-stroke:0.2px #111;left:1256.00px;">Best Prices Guarante</div>
<div class="t" style="top:481.61px;font-size:19.6px;line-height:19.6px;color:#111;letter-spacing:0.227px;-webkit-text-stroke:0.2px #111;left:1256.00px;">ed with Deals, Speci</div>
<div class="t" style="top:511.01px;font-size:19.6px;line-height:19.6px;color:#111;letter-spacing:0.217px;-webkit-text-stroke:0.2px #111;left:1256.00px;">al Member Prices.</div>
<div class="t" style="top:539.38px;font-size:14.2px;line-height:14.2px;color:#8c8c8c;letter-spacing:0.283px;-webkit-text-stroke:0.2px #8c8c8c;left:1256.60px;">Powered by rateup.app</div>
<div class="b" style="left:1243px;top:569px;width:216px;height:46px;background:#fff;border-radius:8px;box-shadow:0 1px 0.5px rgba(0,0,0,0.13);"></div>
<svg class="b" style="left:1272px;top:583px" width="17" height="17" viewBox="0 0 17 17"><path d="M8.3 4.2 A3.4 3.4 0 0 1 13.4 9.3 M4.4 8.2 A3.4 3.4 0 0 0 9.4 13.2 M6.8 10.6 L10.7 6.6" fill="none" stroke="#3c91e6" stroke-width="1.5" stroke-linecap="round"/></svg>
<div class="t" style="top:581.67px;font-size:20px;line-height:20px;color:#3c91e6;letter-spacing:0.589px;-webkit-text-stroke:0.2px #3c91e6;left:1297.30px;">Bookings.com</div>
<div class="b" style="left:1261px;top:827px;width:200px;height:25px;background:#fff;border:1px solid #c3c9d1;border-radius:13px;box-sizing:border-box;"></div>
<svg class="b" style="left:1234px;top:830px" width="18" height="18" viewBox="0 0 18 18"><path d="M9 3.2 V15 M3 9.1 H15" stroke="#4a97e8" stroke-width="1.5" stroke-linecap="round"/></svg>
<svg class="b" style="left:1439px;top:831px" width="18" height="17" viewBox="0 0 18 17"><path d="M10 14.8 H5.3 Q2.7 14.8 2.7 12.2 V4.2 Q2.7 1.6 5.3 1.6 H13.1 Q15.7 1.6 15.7 4.2 V9.1 Z M15.7 9.1 H12.2 Q9.7 9.1 9.7 11.8 V14.8" fill="none" stroke="#4a97e8" stroke-width="1.5" stroke-linejoin="round"/></svg>
<svg class="b" style="left:1468px;top:830px" width="20" height="18" viewBox="0 0 20 18"><path d="M3 6.2 Q3 4.6 4.6 4.6 H6.6 L8 2.8 H12 L13.4 4.6 H15.4 Q17 4.6 17 6.2 V13.4 Q17 15 15.4 15 H4.6 Q3 15 3 13.4 Z" fill="none" stroke="#4a97e8" stroke-width="1.5" stroke-linejoin="round"/><circle cx="10" cy="9.8" r="2.4" fill="none" stroke="#4a97e8" stroke-width="1.5"/></svg>
<svg class="b" style="left:1504px;top:830px" width="18" height="18" viewBox="0 0 18 18"><rect x="6.6" y="1.2" width="4.8" height="9.6" rx="2.4" fill="none" stroke="#4a97e8" stroke-width="1.5"/><path d="M4.2 8.4 Q4.2 13.2 9 13.2 Q13.8 13.2 13.8 8.4 M9 13.2 V16.4 M6.6 16.6 H11.4" fill="none" stroke="#4a97e8" stroke-width="1.5" stroke-linecap="round"/></svg>
</body></html>
